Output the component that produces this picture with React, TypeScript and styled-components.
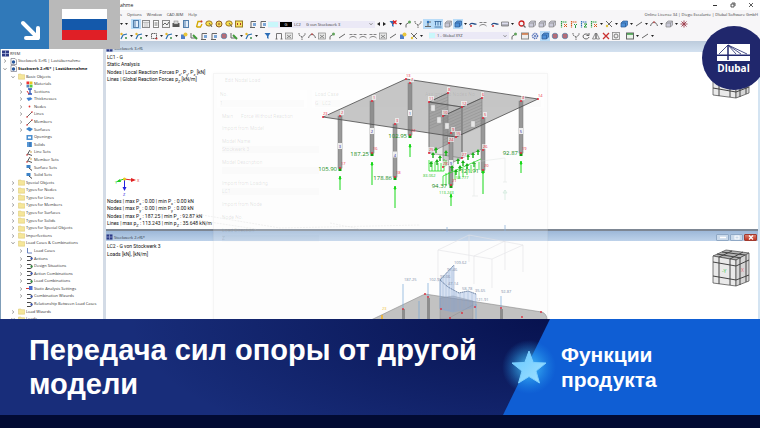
import React from "react";
import styled, { createGlobalStyle } from "styled-components";

const Global = createGlobalStyle`
  *, *::before, *::after { box-sizing: border-box; }
  html, body { margin: 0; padding: 0; }
  body { background: #020b33; }
  button, input, select { font: inherit; color: inherit; border: 0; padding: 0; margin: 0; background: none; }
`;

const ui = `"Open Sans", "Noto Sans", sans-serif`;
const narrow = `Roboto, "Liberation Sans", sans-serif`;
const display = `"Liberation Sans", Arial, sans-serif`;

/* ---------- page ---------- */

const Page = styled.div`
  display: flex;
  flex-direction: column;
  min-height: 100vh;
  overflow: hidden;
  font-family: ${ui};
  color: #3c3c3c;
`;

const Workspace = styled.main`
  position: relative;
  flex: 1 0 0;
  min-height: 0;
  display: flex;
  flex-direction: column;
  overflow: hidden;
  background: #fff;
`;

/* ---------- window chrome ---------- */

const TitleBar = styled.header`
  display: flex;
  justify-content: space-between;
  align-items: center;
  height: 10px;
  padding: 0 5px 0 120px;
  font-size: 5px;
  color: #222;
`;

const WindowControls = styled.div`
  display: flex;
  gap: 10px;
`;

const WindowControl = styled.button`
  display: flex;
  width: 8px;
  height: 8px;
  align-items: center;
  justify-content: center;
`;

const MenuBar = styled.nav`
  display: flex;
  justify-content: space-between;
  align-items: center;
  height: 8px;
  padding: 0 2px 0 120px;
  background: #f7f6f8;
  font-size: 4px;
`;

const MenuItems = styled.div`
  display: flex;
  gap: 5px;
`;

const MenuLink = styled.a`
  color: inherit;
  text-decoration: none;
`;

const Toolbar = styled.div<{ $h: number }>`
  display: flex;
  align-items: center;
  height: ${(p) => p.$h}px;
  padding-left: 119px;
  background: #f7f6f8;
`;

const Tool = styled.button<{ $on?: boolean; $gap?: number }>`
  display: flex;
  flex: none;
  width: 10px;
  height: 10px;
  margin-left: ${(p) => p.$gap ?? 0}px;
  align-items: center;
  justify-content: center;
  background: ${(p) => (p.$on ? "#b9dcf8" : "transparent")};
`;

const Drop = styled.button<{ $w?: number }>`
  display: flex;
  flex: none;
  width: ${(p) => p.$w ?? 5}px;
  height: 8px;
  align-items: center;
  justify-content: center;
`;

const Combo = styled.div<{ $w: number; $gap?: number }>`
  display: flex;
  flex: none;
  align-items: center;
  gap: 2px;
  width: ${(p) => p.$w}px;
  height: 7px;
  margin-left: ${(p) => p.$gap ?? 0}px;
  padding-right: 2px;
  background: #ebe9f6;
  font-size: 4px;
`;

const Swatch = styled.span<{ $dark?: boolean; $wide?: boolean }>`
  width: ${(p) => (p.$dark ? 12 : p.$wide ? 10 : 6)}px;
  height: 5px;
  background: ${(p) => (p.$dark ? "#000" : "#c9f7fb")};
  color: #fff;
  line-height: 5px;
  text-align: center;
`;

const CaseCode = styled.span`
  width: 10px;
`;

const ComboSelect = styled.select`
  flex: 1;
  min-width: 0;
  height: 7px;
  appearance: none;
  line-height: 7px;
  outline: 0;
`;

/* ---------- body ---------- */

const Body = styled.div`
  flex: 1;
  min-height: 0;
  display: grid;
  grid-template-columns: 106px minmax(0, 1fr);
  border-right: 2px solid #d4e4f2;
`;

const TreePanel = styled.aside`
  display: flex;
  min-height: 0;
  padding-top: 9px;
  background: #fff;
  border-left: 1px solid #7f9db8;
  border-right: 3px solid #d3dbe6;
`;

const TreeList = styled.ul`
  flex: 1;
  display: grid;
  grid-auto-rows: 1fr;
  margin: 0 0 -4px;
  padding: 0;
  list-style: none;
  font-size: 4px;
`;

const TreeRow = styled.li<{ $level: number; $bold?: boolean }>`
  display: flex;
  align-items: center;
  min-height: 0;
  padding-left: ${(p) => (p.$level < 0 ? 1 : 1 + p.$level * 8)}px;
  font-weight: ${(p) => (p.$bold ? 700 : 400)};
  color: ${(p) => (p.$bold ? "#111" : "#2e2e2e")};
  white-space: nowrap;
  line-height: 6px;
`;

const Toggle = styled.button`
  display: flex;
  width: 6px;
  height: 6px;
  margin-right: 2px;
  align-items: center;
  justify-content: center;
`;

const TreeIcon = styled.span`
  display: flex;
  width: 7px;
  height: 7px;
  margin-right: 1px;
`;

const Mdi = styled.section`
  position: relative;
  display: flex;
  flex-direction: column;
  min-height: 0;
  overflow: hidden;
`;

const DocWindow = styled.article<{ $main?: boolean }>`
  position: relative;
  display: flex;
  flex-direction: column;
  flex: ${(p) => (p.$main ? "0 0 190px" : "1 1 0")};
  min-height: 0;
  border-bottom: ${(p) => (p.$main ? "2px solid #7d8794" : "0")};
`;

const DocTitle = styled.header<{ $active?: boolean }>`
  display: flex;
  align-items: center;
  height: ${(p) => (p.$active ? 10 : 11)}px;
  padding: ${(p) => (p.$active ? "2px 1px 0 0" : "4px 1px 0 0")};
  background: ${(p) =>
    p.$active ? "linear-gradient(#9db8d8, #bdd2ea)" : "linear-gradient(#bccbdc, #d3e1f0)"};
  font-size: 4px;
  color: #2b3644;
  gap: 1px;
`;

const DocName = styled.span`
  flex: 1;
`;

const DocButton = styled.button<{ $close?: boolean }>`
  display: flex;
  width: 13px;
  height: 7px;
  align-items: center;
  justify-content: center;
  border: 1px solid ${(p) => (p.$close ? "#a23a2e" : "#8fa8c5")};
  border-radius: 1px;
  background: ${(p) => (p.$close ? "linear-gradient(#dd8272, #bf3320)" : "#c9d9ea")};
`;

const Canvas = styled.div`
  flex: 1;
  display: flex;
  flex-direction: column;
  justify-content: space-between;
  padding: 2px 0 2px 1px;
  background: #fff;
`;

const Lines = styled.div<{ $rows: number }>`
  display: grid;
  grid-auto-rows: 1fr;
  align-items: center;
  height: ${(p) => (p.$rows === 4 ? 29 : 15)}px;
  font-family: ${narrow};
  font-size: 5px;
  line-height: 7px;
  color: #111;
  white-space: nowrap;

  sub {
    font-size: 4px;
    line-height: 1px;
  }
`;

const Scene = styled.svg`
  position: absolute;
  left: 0;
  top: 0;
  width: 652px;
  height: 278px;
  pointer-events: none;
  font-family: ${ui};
`;

const CubeSlot = styled.svg<{ $top: number }>`
  position: absolute;
  right: 8px;
  top: ${(p) => p.$top}px;
  width: 38px;
  height: 38px;
`;

/* ---------- fading dialog ---------- */

const Ghost = styled.form`
  position: absolute;
  left: 107px;
  top: 32px;
  width: 335px;
  bottom: -10px;
  padding: 3px;
  border: 1px solid rgba(0, 0, 0, 0.03);
  background: rgba(246, 246, 246, 0.22);
  box-shadow: 0 0 4px rgba(0, 0, 0, 0.03);
  font-family: ${narrow};
  font-size: 5px;
  line-height: 7px;
  color: rgba(60, 60, 60, 0.14);
`;

const GhostCaption = styled.div`
  padding-left: 8px;
  margin-bottom: 6px;
`;

const GhostTop = styled.div`
  display: grid;
  grid-template-columns: 90px 105px 1fr;
  gap: 5px;
  height: 18px;
`;

const GhostBox = styled.label`
  display: flex;
  flex-direction: column;
  justify-content: space-between;
  padding: 1px 3px;
  background: rgba(255, 255, 255, 0.55);
`;

const GhostInput = styled.input`
  width: 100%;
  height: 7px;
  background: rgba(0, 0, 0, 0.012);
`;

const GhostTabs = styled.div`
  display: flex;
  gap: 8px;
  padding: 5px;
  width: 62px;
  white-space: nowrap;
`;

const GhostFields = styled.div`
  display: grid;
  gap: 6px;
  width: 102px;
  padding-left: 5px;
`;

const GhostField = styled.label`
  display: grid;
  gap: 1px;
`;

/* ---------- overlays ---------- */

const Badges = styled.div`
  position: absolute;
  left: 0;
  top: 0;
  display: flex;
  height: 49px;
`;

const ArrowBadge = styled.div`
  display: flex;
  width: 49px;
  align-items: center;
  justify-content: center;
  padding: 13px 0 0 13px;
  background: #3079b9;
`;

const FlagBadge = styled.div`
  display: flex;
  width: 71px;
  align-items: center;
  justify-content: center;
  background: #b9b9b9;
`;

const Flag = styled.div`
  width: 45px;
  height: 31px;
  background: linear-gradient(#fff 0 33%, #1459ab 33% 67%, #e01f26 67%);
`;

const Brand = styled.div`
  position: absolute;
  right: -6px;
  top: 26px;
  display: flex;
  flex-direction: column;
  align-items: center;
  width: 64px;
  height: 64px;
  padding: 18px 1px 0 0;
  border-radius: 50%;
  background: #20276c;
  color: #fff;
  font: 700 10px/15px ${ui};
`;

/* ---------- caption banner ---------- */

const Banner = styled.section`
  display: grid;
  grid-template-columns: minmax(0, 1fr) 257px;
  min-height: 96px;
  background: radial-gradient(ellipse 420px 150px at 550px 0, #07124f, rgba(7, 18, 79, 0) 100%), #182d7a;
`;

const Headline = styled.h1`
  align-self: center;
  margin: 0;
  padding: 0 0 0 29px;
  font: 700 29px/34px ${display};
  color: #fff;
`;

const Category = styled.div`
  position: relative;
  isolation: isolate;
  display: flex;
  align-items: center;
  gap: 6px;
  font: 700 21px/25px ${display};
  color: #fff;

  &::before {
    content: "";
    position: absolute;
    inset: 0;
    z-index: -1;
    background: #0f5ed4;
    clip-path: polygon(47px 0, 100% 0, 100% 100%, 0 100%);
  }
`;

const CategoryName = styled.p`
  margin: 0;
  width: 120px;
`;

const StarMark = styled.svg`
  flex: none;
  width: 52px;
  height: 64px;
  overflow: visible;
`;

const Strip = styled.footer`
  height: 13px;
  background: #020b33;
`;

/* ---------- tool glyphs ---------- */

const K = "#666";
const B = "#2d6fb8";
const glyphs: Record<string, React.ReactNode> = {
  panel: <><rect x="1.5" y=".5" width="5" height="7" fill="#e4eefb" stroke="#5580ad" /><path d="M3 1v6" stroke="#5580ad" /></>,
  grid: <><rect x=".5" y=".5" width="7" height="7" fill="#eee" stroke="#888" /><path d="M1 2.500h6M3 2.500v5M5 2.500v5" stroke="#aaa" strokeWidth=".6" /></>,
  page: <><rect x="1.500" y=".5" width="5" height="7" fill="#fff" stroke="#888" /><path d="M2.500 3h3M2.500 5h3" stroke="#777" /></>,
  plot: <><rect x=".5" y=".5" width="7" height="7" fill="#f2f2f2" stroke="#888" /><path d="M1 5l2-2 2 2 2-3" fill="none" stroke={K} /></>,
  print: <><rect x=".5" y="3" width="7" height="4" fill="#555" /><rect x="2" y="1" width="4" height="3" fill="#ddd" stroke="#777" strokeWidth=".5" /></>,
  pen: <><path d="M1.500 7L3 1.500h4M1.500 7h4l1.500-3" fill="none" stroke="#d3a800" strokeWidth="1.300" /><circle cx="6.500" cy="1.500" r="1" fill="#c33" /></>,
  lasso: <><ellipse cx="4" cy="3.500" rx="3.200" ry="2.600" fill="#f6df4d" stroke="#a07a20" /><path d="M4 3l3 4" stroke={K} /></>,
  target: <><circle cx="4" cy="4" r="3" fill="#f3dc5c" stroke="#8e5a20" /><circle cx="4" cy="4" r="1.200" fill="#b84" /></>,
  box: <><rect x=".5" y="1" width="7" height="6" fill="#f7e465" stroke="#9a7c20" /><path d="M2.500 3v2M5.500 3v2" stroke="#a33" /></>,
  crane: <><path d="M2 7.500V1.500h5M1 7.500h5" fill="none" stroke={K} /><rect x="4" y="3" width="3" height="3" fill="#7ca7d8" /></>,
  filter: <path d="M.5 1h6L4.500 4v3L3 6V4z" fill={B} />,
  filterx: <><path d="M.5 1h6L4.500 4v3L3 6V4z" fill={B} /><path d="M4 .5l3.500 3.500M7.500 .5L4 4" stroke="#e02020" strokeWidth="1.200" /></>,
  node: <><path d="M2 7.500V4.500L5.500 2" stroke={K} fill="none" /><circle cx="5.500" cy="2" r="1.500" fill="#62a35d" /></>,
  fork: <path d="M1 1v2l3 2 3-2V1M4 5v3" fill="none" stroke={K} strokeDasharray="1.500 .6" />,
  support: <><path d="M1 6.500h6M4 6V2h3" fill="none" stroke={K} /><circle cx="4" cy="2" r="1.200" fill={B} /></>,
  loads: <path d="M.5 1.500h7M1.500 1.500v4M4 1.500v4M6.500 1.500v4M.5 7h7" stroke="#2f5f96" strokeWidth=".8" />,
  cube: <><path d="M1 3l2-2h4.500v4l-2 2H1z" fill="#c9c9d8" stroke="#888" strokeWidth=".7" /><path d="M1 3h4.500v4M5.500 3l2-2" fill="none" stroke="#888" strokeWidth=".7" /></>,
  bluecube: <><path d="M1 3l2-2h4.500v4l-2 2H1z" fill="#4d8fd6" stroke="#2b5a94" strokeWidth=".7" /><path d="M1 3h4.500v4" fill="none" stroke="#2b5a94" strokeWidth=".7" /></>,
  curve: <><path d="M.5 5c2-4 4 0 7-1" fill="none" stroke="#244c86" strokeWidth="1.200" /><circle cx="2" cy="6" r="1" fill="#c33" /></>,
  dash: <path d="M.5 2.500h3M4.500 2.500h3M.5 6c2-2 5-2 7 0" fill="none" stroke={K} strokeWidth=".8" />,
  ruler: <path d="M.5 2h7v4h-7zM2 4v2M4 4v2M6 4v2" fill="#dde" stroke={K} strokeWidth=".7" />,
  zoomx: <><circle cx="3.500" cy="3.500" r="2.500" fill="none" stroke="#c22" strokeWidth="1.300" /><path d="M5 5l2.500 2.500" stroke={K} strokeWidth="1.200" /></>,
  axisx: <><path d="M1.500 1v6.500M1 2h6" stroke="#2a9a40" strokeWidth="1.200" strokeDasharray="1.500 .5" /><path d="M4 4l3 3M7 4L4 7" stroke="#d95a1c" /></>,
  axisy: <><path d="M1.500 1v6.500M1 2h6" stroke="#d95a1c" strokeWidth="1.200" strokeDasharray="1.500 .5" /><path d="M4 4l1.500 1.500L7 4M5.500 5.500V8" stroke="#2a9a40" fill="none" /></>,
  axisz: <><path d="M1.500 1v6.500M1 2h6" stroke={B} strokeWidth="1.200" strokeDasharray="1.500 .5" /><path d="M4 4h3L4 7h3" stroke="#2a9a40" fill="none" /></>,
  cutter: <><path d="M1 1l6 6M7 1L1 7" stroke={K} /><circle cx="2" cy="6" r="1.200" fill="#e4c53c" /></>,
  arc: <><path d="M.5 6C2 1 6 1 7.500 6" fill="none" stroke={K} /><circle cx="4" cy="2.300" r="1" fill="#b55" /></>,
  line: <path d="M1 6L7 2" stroke={K} />,
  star: <path d="M4 .5v7M.5 4h7M1.500 1.500l5 5M6.500 1.500l-5 5" stroke="#9b3a49" strokeWidth=".9" />,
  square: <><path d="M1.500 1.500h5v5h-5z" fill="none" stroke={K} strokeDasharray="1.500 .5" /><circle cx="6.500" cy="6.500" r="1" fill="#c33" /></>,
  beam: <><path d="M1 7l2-4 4-1" fill="none" stroke="#2a6fb0" strokeWidth="1.200" /><circle cx="1.500" cy="2" r="1.200" fill="#e4b52c" /><circle cx="6" cy="6" r="1" fill="#3a8f4a" /></>,
  frame: <path d="M1.500 7V1.500h5V7M.5 7h2M5.500 7h2" fill="none" stroke={K} strokeWidth=".9" />,
  hatch: <><rect x=".5" y="1" width="7" height="6" fill="#e6e6e6" stroke="#888" strokeWidth=".7" /><path d="M2 3l4 3M6 3L2 6" stroke="#666" strokeWidth=".7" /></>,
  green: <><path d="M1 1v5h4" fill="none" stroke={K} /><path d="M3 3l4 4" stroke="#3f9a3a" strokeWidth="2" /></>,
  blueblob: <><rect x="1" y="2.500" width="4" height="4.500" fill="#4f7fc8" /><circle cx="5.500" cy="2.500" r="2" fill="#e8c63d" /></>,
  rotate: <path d="M6.500 3A3 2.500 0 1 0 7 5M7 1v2.500H4.500" fill="none" stroke={K} />,
  mirror: <path d="M3.500 1v6H.5zM4.500 1v6h3z" fill="none" stroke={K} strokeWidth=".7" />,
  del: <path d="M1 1l6 6M7 1L1 7" stroke="#c93030" strokeWidth="1.300" />,
  lens: <><rect x=".5" y=".5" width="7" height="7" fill="#eee" stroke="#888" strokeWidth=".8" /><circle cx="4" cy="4" r="2" fill="none" stroke={K} strokeWidth=".8" /></>,
  sheet: <><rect x=".5" y="1" width="7" height="6" fill="#eaf4ea" stroke={K} /><path d="M1 2h6" stroke="#3a9a40" strokeWidth="1.500" /></>,
  sheetred: <><rect x=".5" y="1" width="7" height="6" fill="#eee" stroke="#888" /><path d="M1 2h6" stroke="#d0703c" strokeWidth="1.500" /></>,
  gear: <><circle cx="4" cy="4" r="2.500" fill="none" stroke="#5270b8" strokeWidth="1.500" strokeDasharray="1.200 .6" /><circle cx="4" cy="4" r="1" fill="#5270b8" /></>,
  redblob: <><circle cx="4" cy="4" r="2.800" fill="#9aa7c0" stroke="#5c6d90" strokeWidth=".7" /><path d="M3 2v4M5 2v4" stroke="#c33" /></>,
};

type ToolSpec = { g: string; on?: boolean; gap?: number };
type Item = string | ToolSpec;

function Glyph({ name }: { name: string }) {
  return (
    <svg width="8" height="8" viewBox="0 0 8 8" aria-hidden="true">
      {glyphs[name]}
    </svg>
  );
}

const DownArrow = () => (
  <svg width="3" height="2" viewBox="0 0 3 2" aria-hidden="true">
    <path d="M0 0h3L1.500 2z" fill="#222" />
  </svg>
);

function Tools({ items }: { items: Item[] }) {
  return (
    <>
      {items.map((it, i) => {
        if (it === "v") return <Drop key={i} type="button" aria-label="More"><DownArrow /></Drop>;
        const spec: ToolSpec = typeof it === "string" ? { g: it } : it;
        return (
          <Tool key={i} type="button" aria-label={spec.g} $on={spec.on} $gap={spec.gap}>
            <Glyph name={spec.g} />
          </Tool>
        );
      })}
    </>
  );
}

const Chevron = ({ open }: { open?: boolean }) => (
  <svg width="4" height="4" viewBox="0 0 4 4" aria-hidden="true">
    <path d={open ? "M.5 1.200L2 2.800l1.500-1.600" : "M1.200 .5L2.800 2 1.200 3.500"} fill="none" stroke="#666" strokeWidth=".7" />
  </svg>
);

/* ---------- tree ---------- */

const treeGlyphs: Record<string, React.ReactNode> = {
  app: <><rect width="7" height="6" y=".5" fill="#2c3a86" /><path d="M0 3.500h7M3.500 .5v6" stroke="#b9c3e6" strokeWidth=".7" /></>,
  model: <><path d="M1 .5h4l1.500 1.500v4.500H1z" fill="#fff" stroke="#667" strokeWidth=".6" /><circle cx="3.500" cy="4" r="1.700" fill="#24549c" /></>,
  folder: <path d="M.5 1h2.500l.7.700h3v4.500H.5z" fill="#f5e69a" stroke="#d8c46c" strokeWidth=".5" />,
  mat: <><rect x=".5" y=".5" width="2.800" height="2.800" fill="#e33" /><rect x="3.700" y=".5" width="2.800" height="2.800" fill="#e8c51e" /><rect x=".5" y="3.700" width="2.800" height="2.800" fill="#58b" /><rect x="3.700" y="3.700" width="2.800" height="2.800" fill="#5c4" /></>,
  sec: <><path d="M2 1h4M4 1v5M2 6h4" stroke="#2c55b8" strokeWidth="1.300" /><path d="M1 3l2 3" stroke="#d33" /></>,
  thick: <path d="M.5 2l4-.7L6.500 3l-4 2z" fill="#3d7fd0" />,
  node: <circle cx="3.500" cy="3.500" r=".9" fill="#e03030" />,
  line: <><path d="M1 6l5-5" stroke="#444" strokeWidth=".8" /><circle cx="1" cy="6" r=".8" fill="#d33" /><circle cx="6" cy="1" r=".8" fill="#d33" /></>,
  surf: <path d="M0 3l3-2 4 2-3 2.500z" fill="#3d83c8" />,
  open: <><rect x=".5" y="1" width="6" height="5" fill="#4b8fd0" /><rect x="2" y="2.500" width="3" height="2" fill="#fff" /></>,
  solid: <><rect x="1" y="1" width="5" height="5" fill="#5898d6" /><path d="M4 1v5" stroke="#2a5f9c" /></>,
  set: <><path d="M1 6l3-5M2 5l4 1.500" stroke="#444" strokeWidth=".9" /><circle cx="1" cy="6" r=".8" fill="#d33" /><circle cx="5" cy="3" r=".8" fill="#c93" /></>,
  sset: <><rect x=".5" y="1" width="4" height="3" fill="#3d83c8" /><path d="M3 4l3 2.500" stroke="#444" /></>,
  load: <path d="M1.500 1v5h4.500" fill="none" stroke="#4668b0" strokeWidth=".8" />,
  act: <><path d="M1 1.500h3a2 2 0 0 1 0 4H1" fill="none" stroke="#333" strokeWidth=".9" /><circle cx="5.500" cy="3.500" r="1.100" fill="#3657c8" /></>,
  acg: <><path d="M1 1.500h3a2 2 0 0 1 0 4H1" fill="none" stroke="#333" strokeWidth=".9" /><circle cx="5.500" cy="3.500" r="1.100" fill="#2f9b3f" /></>,
  stat: <><path d="M0 3.500h3" stroke="#d33" /><path d="M3 1h3.500v4H3z" fill="#4a6fd0" /></>,
};

type Node = [number, string, string, string];
const tree: Node[] = [
  [-1, "", "app", "RFEM"],
  [0, ">", "model", "Stockwerk 3.rf6 | Lastübernahme"],
  [0, "v", "model", "Stockwerk 2.rf6* | Lastübernahme"],
  [1, "v", "folder", "Basic Objects"],
  [2, ">", "mat", "Materials"],
  [2, ">", "sec", "Sections"],
  [2, ">", "thick", "Thicknesses"],
  [2, ">", "node", "Nodes"],
  [2, ">", "line", "Lines"],
  [2, ">", "line", "Members"],
  [2, ">", "surf", "Surfaces"],
  [2, "", "open", "Openings"],
  [2, "", "solid", "Solids"],
  [2, "", "set", "Line Sets"],
  [2, "", "set", "Member Sets"],
  [2, "", "sset", "Surface Sets"],
  [2, "", "sset", "Solid Sets"],
  [1, ">", "folder", "Special Objects"],
  [1, ">", "folder", "Types for Nodes"],
  [1, ">", "folder", "Types for Lines"],
  [1, ">", "folder", "Types for Members"],
  [1, ">", "folder", "Types for Surfaces"],
  [1, ">", "folder", "Types for Solids"],
  [1, ">", "folder", "Types for Special Objects"],
  [1, ">", "folder", "Imperfections"],
  [1, "v", "folder", "Load Cases & Combinations"],
  [2, ">", "load", "Load Cases"],
  [2, ">", "act", "Actions"],
  [2, ">", "acg", "Design Situations"],
  [2, ">", "act", "Action Combinations"],
  [2, ">", "acg", "Load Combinations"],
  [2, ">", "stat", "Static Analysis Settings"],
  [2, ">", "act", "Combination Wizards"],
  [2, "", "act", "Relationship Between Load Cases"],
  [1, ">", "folder", "Load Wizards"],
  [1, "v", "folder", "Loads"],
];

function Tree() {
  return (
    <TreeList>
      {tree.map(([level, state, icon, name]) => (
        <TreeRow key={name} $level={level} $bold={level === 0 && state === "v"}>
          {level >= 0 && (
            <Toggle type="button" aria-label={name}>
              {state && <Chevron open={state === "v"} />}
            </Toggle>
          )}
          <TreeIcon>
            <svg width="7" height="7" viewBox="0 0 7 7" aria-hidden="true">{treeGlyphs[icon]}</svg>
          </TreeIcon>
          {name}
        </TreeRow>
      ))}
    </TreeList>
  );
}

/* ---------- model drawings ---------- */

// x, top y, bottom y of each column with its upper, lower and member number
const columns: [number, number, number, string, string, string][] = [
  [340, 116, 168, "2", "17", "3"],
  [372, 101, 153, "1", "16", "2"],
  [410, 83, 135, "7", "22", "1"],
  [395, 124, 177, "3", "18", "4"],
  [521, 101, 153, "4", "19", "5"],
  [483, 118, 170, "5", "20", ""],
  [451, 133, 185, "9", "21", "9"],
];

// x, top, bottom of each reaction arrow
const arrows: [number, number, number][] = [
  [340, 176, 190], [372, 162, 185], [410, 144, 157], [395, 186, 208], [521, 161, 173], [483, 170, 194], [451, 194, 206],
];

const forces: [number, number, string][] = [
  [337, 171, "105.90"], [369, 156, "187.25"], [407, 138, "102.95"], [392, 180, "178.86"],
  [518, 155, "92.87"], [479, 173, "121.91"], [447, 188, "94.37"],
];

const nodes: [number, number, string][] = [
  [406, 79, "13"], [538, 99, "14"], [323, 117, "23"], [456, 137, "15"], [448, 93, "8"], [482, 98, "6"],
  [429, 102, "11"], [462, 107, "12"], [443, 116, "10"], [429, 153, "25"], [462, 158, "27"], [443, 167, "28"], [483, 150, "26"], [449, 143, "24"],
];

const sprouts: [number, number][] = [
  [433, 155], [436, 150], [440, 158], [446, 153], [446, 163], [458, 161], [463, 163], [468, 157], [473, 155], [478, 152], [452, 168], [460, 168], [467, 166], [437, 162], [431, 164], [474, 164], [456, 172],
];

function Reactions() {
  return (
    <g>
      <g fill="rgba(120,120,120,.38)" stroke="#777" strokeWidth=".6">
        <path d="M448 93l-19 9v51l19-9z" />
        <path d="M482 98l-20 9v51l20-9z" />
        <path d="M462 107l-19 9v51l19-9z" />
        <path d="M429 102l33 5v51l-33-5z" fillOpacity=".4" />
      </g>
      <g stroke="#888" strokeWidth=".4">
        {[0, 1, 2, 3, 4, 5, 6, 7, 8].map((i) => (
          <path key={i} d={`M429 ${105 + i * 3}l19-8M443 ${119 + i * 3}l39-17`} />
        ))}
      </g>
      {columns.map(([x, a, b]) => (
        <rect key={x} x={x - 2} y={a} width="4" height={b - a} fill="#999" stroke="#777" strokeWidth=".5" />
      ))}
      <path d="M406 79L538 99 456 137 323 117z" fill="rgba(130,130,130,.45)" stroke="#4a4a4a" strokeWidth=".8" />
      <path d="M429 102l19-9M429 102l33 5M443 116l39-18" stroke="#444" strokeWidth=".7" />
      {columns.map(([x, a, b, , , n]) => (
        <g key={x}>
          {n && <rect x={x - 2} y={(a + b) / 2 + 1} width="4" height="6" fill="#eee" />}
          <text x={x} y={(a + b) / 2 + 6} fontSize="4" textAnchor="middle" fill="#2222a0">{n}</text>
        </g>
      ))}
      {[[438, 120], [446, 126], [472, 124], [432, 108]].map(([x, y]) => (
        <rect key={x} x={x - 1} y={y - 3} width="4" height="6" fill="#e6e6e6" stroke="#aaa" strokeWidth=".4" />
      ))}
      <g stroke="#1fe01f" strokeWidth=".8" fill="none">
        <path d="M429 160v11h15V159M432 161v10M435 162v9M438 163v8M441 163v8M443 176v10M446 173v13M449 172v12M455 171v9M459 170v9M463 168v9M467 167v8M471 165v8M475 164v8M479 162v8M443 176l38-17" />
      </g>
      <g fill="#18b018">
        {sprouts.map(([x, y]) => <path key={`${x}-${y}`} d={`M${x} ${y - 3}l2 3h-1.300v3h-1.400v-3h-1.300z`} />)}
      </g>
      {columns.map(([x, , b]) => <rect key={x} x={x - 1.5} y={b} width="3" height="3" fill="#12a012" />)}
      <g stroke="#16d916" strokeWidth="1" fill="#16d916">
        {arrows.map(([x, a, b]) => (
          <g key={x}>
            <path d={`M${x} ${a + 2}V${b}`} />
            <path d={`M${x} ${a}l1 3h-2z`} />
          </g>
        ))}
      </g>
      <g fontSize="6" fill="#168a16" textAnchor="end">
        {forces.map(([x, y, t]) => <text key={t} x={x} y={y}>{t}</text>)}
      </g>
      <g fontSize="4" fill="#1fc41f">
        <text x="423" y="177">83.062</text>
        <text x="456" y="179">58.777</text>
        <text x="439" y="194">113.243</text>
      </g>
      <g fontSize="4" fill="#e8283c">
        {nodes.map(([x, y, t]) => (
          <g key={t}>
            <rect x={x - 1} y={y - 6} width={t.length * 3} height="5" fill="rgba(255,255,255,.6)" />
            <circle cx={x} cy={y} r="1" />
            <text x={x} y={y - 2}>{t}</text>
          </g>
        ))}
        {columns.map(([x, a, b, t, u]) => (
          <g key={x}>
            <rect x={x} y={a - 6} width="4" height="5" fill="rgba(255,255,255,.6)" />
            <circle cx={x} cy={a} r="1" />
            <circle cx={x} cy={b} r="1" />
            <text x={x + 1} y={a - 2}>{t}</text>
            <text x={x + 1} y={b - 3}>{u}</text>
          </g>
        ))}
      </g>
      <g stroke="#d5dcd8" strokeWidth=".6" fill="none" opacity=".6">
        <path d="M474 162l31-4v24M503 182h4M474 162v34M472 196h6" />
        <path d="M505 190v10M505 190l-2 3h4z" stroke="#a9d8c0" />
      </g>
      <path d="M196 214l84 14 140-3M196 214v6l60 9M330 223l30 6" fill="none" stroke="#e8e8e8" strokeWidth=".6" strokeDasharray="2 1" />
    </g>
  );
}

function Axes() {
  return (
    <g>
      <path d="M124.500 179l7 1" stroke="#e02222" strokeWidth="1" />
      <path d="M131 178l5 2-5 2z" fill="#e02222" />
      <path d="M124 179l-6 2" stroke="#1fcf1f" strokeWidth="1" />
      <path d="M120 179l-4 3 5 0z" fill="#1fcf1f" />
      <path d="M124.500 180v8" stroke="#2222e0" strokeWidth="1" />
      <path d="M122.500 187h4l-2 4z" fill="#2222e0" />
      <circle cx="124.500" cy="179" r="1.500" fill="#e8c81c" />
      <text x="137" y="182" fontSize="4" fill="#e02222">X</text>
      <text x="115" y="184" fontSize="4" fill="#1fcf1f">Y</text>
      <text x="123" y="196" fontSize="4" fill="#2222e0">Z</text>
    </g>
  );
}

const loadLabels: [number, number, string][] = [
  [404, 281, "187.25"], [429, 281, "102.95"], [454, 264, "109.62"], [447, 271, "97.46"], [440, 278, "93.06"],
  [448, 285, "47.14"], [462, 290, "58.78"], [475, 292, "35.65"], [476, 301, "121.91"], [501, 293, "92.87"],
];

function Loads() {
  return (
    <g>
      <g stroke="#e3e3e6" strokeWidth=".6" fill="none">
        <path d="M438 250l31-15 54 10-31 14zM438 250v32M469 235v27M523 245v27M492 259v29M474 256l31-15v29M474 256v28" />
      </g>
      <g stroke="#8fb2d8" strokeWidth=".8"><path d="M447 227v5M505 225v6" /></g>
      <path d="M371 320L425 294 542 312q5 2 5 8z" fill="#c2c2c2" stroke="#8a8a8a" strokeWidth=".6" />
      <path d="M440 298l13-2 20 5v18h-33zM473 305l-24 13" fill="rgba(140,140,150,.4)" stroke="#888" strokeWidth=".4" />
      <g fill="#8d8d8d">
        <rect x="402" y="309" width="3" height="10" /><rect x="427" y="298" width="3" height="21" /><rect x="500" y="309" width="3" height="10" />
      </g>
      <path d="M440 280l14-15v46l-14-2zM440 280l8 7 11 6 9-2 8 3v13l-23 5-13-3z" fill="rgba(120,155,215,.28)" stroke="#8ba6cf" strokeWidth=".5" />
      <path d="M440 280l14-15M440 280l8 7 11 6 9-2 8 3" fill="none" stroke="#56657c" strokeWidth=".8" strokeDasharray="1 1" />
      <path d="M443 277v32M446 274v35M449 271v39M452 268v42M456 292v18M460 293v16M464 292v16M468 291v16M472 292v14" stroke="#8ba6cf" strokeWidth=".4" />
      <path d="M403 284v25M428 283v15M501 296v13M419 301v18M476 304v15" stroke="#76a6d6" strokeWidth=".7" />
      <g fill="#e02a3a">
        {[[425, 294], [428, 297], [403, 309], [541, 312], [501, 308], [522, 317], [441, 309], [475, 307], [462, 313], [450, 318]].map(([x, y]) => (
          <circle key={x} cx={x} cy={y} r=".9" />
        ))}
      </g>
      <path d="M382 315v4" stroke="#f5b21c" strokeWidth="1.500" />
      <text x="382" y="310" fontSize="4" fill="#f0c030">23</text>
      <g fontSize="4" fill="#7d8fa8">
        {loadLabels.map(([x, y, t]) => <text key={t} x={x} y={y}>{t}</text>)}
      </g>
    </g>
  );
}

function Cube({ top }: { top: number }) {
  return (
    <CubeSlot $top={top} viewBox="0 0 38 38" aria-hidden="true">
      <g stroke="#444" strokeWidth=".7">
        <path d="M1 7L14 1l23 3-13 7z" fill="#b5b5b5" />
        <path d="M1 7l23 4v26L1 34z" fill="#e9e9e9" />
        <path d="M24 11l13-7v28l-13 5z" fill="#d6d6d6" />
        <path d="M1 13l23 4 13-6M1 27l23 4 13-5M7 8v27M18 10v26M28 9v27M34 6v27M5 5l24 4M10 3l23 3M7 8l13-6M18 10l13-7" fill="none" strokeWidth="1" />
      </g>
      <text x="10" y="24" fontSize="5" fill="#2fc83f">-Y</text>
      <text x="29" y="23" fontSize="5" fill="#e26a78">X</text>
    </CubeSlot>
  );
}

const DocIcon = () => (
  <svg width="7" height="6" viewBox="0 0 7 7" aria-hidden="true">{treeGlyphs.app}</svg>
);

export default function App() {
  return (
    <Page>
      <Global />
      <Workspace>
        <TitleBar>
          <span>ahme</span>
          <WindowControls>
            <WindowControl type="button" aria-label="Minimize"><svg width="6" height="6"><path d="M1 3.500h4" stroke="#333" /></svg></WindowControl>
            <WindowControl type="button" aria-label="Restore"><svg width="6" height="6"><path d="M1 2h3v3H1zM2 1h3v3" fill="none" stroke="#333" strokeWidth=".8" /></svg></WindowControl>
            <WindowControl type="button" aria-label="Close"><svg width="6" height="6"><path d="M1 1l4 4M5 1L1 5" stroke="#333" strokeWidth=".8" /></svg></WindowControl>
          </WindowControls>
        </TitleBar>
        <MenuBar>
          <MenuItems>
            <MenuLink href="#tools">s</MenuLink>
            <MenuLink href="#options">Options</MenuLink>
            <MenuLink href="#window">Window</MenuLink>
            <MenuLink href="#cad-bim">CAD-BIM</MenuLink>
            <MenuLink href="#help">Help</MenuLink>
          </MenuItems>
          <span>Online License 34 | Diego Escalante | Dlubal Software GmbH</span>
        </MenuBar>
        <Toolbar $h={12}>
          <Tools items={["v", "v", { g: "panel", on: true, gap: 2 }, "grid", "page", "plot", "print", "panel", { g: "pen", gap: 3 }, "lasso", "target", "lasso", "box", { g: "crane", gap: 4 }, "crane"]} />
          <Combo $w={107}>
            <Swatch $wide />
            <Swatch $dark>G</Swatch>
            <CaseCode>LC2</CaseCode>
            <ComboSelect aria-label="Load case"><option>G von Stockwerk 3</option></ComboSelect>
            <Chevron open />
          </Combo>
          <Drop $w={6} type="button" aria-label="Previous"><svg width="3" height="4"><path d="M3 0v4L0 2z" fill="#222" /></svg></Drop>
          <Drop $w={7} type="button" aria-label="Next"><svg width="3" height="4"><path d="M0 0v4l3-2z" fill="#222" /></svg></Drop>
          <Tools items={["filterx", "v", "node", "fork", { g: "support", on: true }, { g: "loads", on: true }, "cube", { g: "bluecube", on: true }, "v", "curve", "dash", { g: "curve", gap: 2 }, "ruler", "v", { g: "zoomx", gap: 2 }, "cube", "cube", "cube", { g: "axisx", gap: 2 }, "axisy", "axisz", "axisx", "v", "cutter", "v", "bluecube", "v", "line", "v", "arc", "v", "cube", "v", "star"]} />
        </Toolbar>
        <Toolbar $h={11}>
          <Tools items={["beam", "v", "beam", "v", "square", "v", "beam", "v", "blueblob", "green", "crane", "crane", "redblob", "green", "v", "beam", "v", { g: "filter", gap: 4 }, { g: "frame", gap: 1 }, "hatch", { g: "fork", gap: 3 }, "arc", "hatch", "node", "line", { g: "dash", gap: 1 }, "dash", "dash", "hatch", "line", "blueblob", { g: "cutter", gap: 1 }, "v"]} />
          <Combo $w={80} $gap={5}>
            <Swatch />
            <ComboSelect aria-label="Coordinate system"><option>1 - Global XYZ</option></ComboSelect>
            <Chevron open />
          </Combo>
          <Tools items={["node", { g: "sheetred", gap: 1 }, "gear", { g: "bluecube", on: true }, "redblob", "redblob", { g: "fork", gap: 1 }, "rotate", "mirror", "del", "lens", { g: "sheet", gap: 4 }, "v", "line", "v"]} />
        </Toolbar>

        <Body>
          <TreePanel><Tree /></TreePanel>
          <Mdi>
            <DocWindow $main>
              <DocTitle><DocIcon /><DocName>Stockwerk 3.rf6</DocName></DocTitle>
              <Canvas>
                <Lines $rows={4}>
                  <span>LC1 - G</span>
                  <span>Static Analysis</span>
                  <span>Nodes | Local Reaction Forces P<sub>x</sub>, P<sub>y</sub>, P<sub>z</sub> [kN]</span>
                  <span>Lines | Global Reaction Forces p<sub>Z</sub> [kN/m]</span>
                </Lines>
                <Lines $rows={4}>
                  <span>Nodes | max P<sub>x</sub> : 0.00 | min P<sub>x</sub> : 0.00 kN</span>
                  <span>Nodes | max P<sub>y</sub> : 0.00 | min P<sub>y</sub> : 0.00 kN</span>
                  <span>Nodes | max P<sub>z</sub> : 187.25 | min P<sub>z</sub> : 92.87 kN</span>
                  <span>Lines | max p<sub>Z</sub> : 113.243 | min p<sub>Z</sub> : 35.648 kN/m</span>
                </Lines>
              </Canvas>
              <Cube top={20} />
            </DocWindow>
            <DocWindow>
              <DocTitle $active>
                <DocIcon /><DocName>Stockwerk 2.rf6*</DocName>
                <DocButton type="button" aria-label="Minimize window"><svg width="6" height="4"><path d="M0 2.500h6" stroke="#fff" strokeWidth="1.500" /></svg></DocButton>
                <DocButton type="button" aria-label="Restore window"><svg width="6" height="5"><rect x="1" y="1" width="4" height="3" fill="none" stroke="#fff" /></svg></DocButton>
                <DocButton $close type="button" aria-label="Close window"><svg width="6" height="5"><path d="M1 .5l4 4M5 .5l-4 4" stroke="#fff" strokeWidth="1.300" /></svg></DocButton>
              </DocTitle>
              <Canvas>
                <Lines $rows={2}>
                  <span>LC2 - G von Stockwerk 3</span>
                  <span>Loads [kN], [kN/m]</span>
                </Lines>
              </Canvas>
              <Cube top={18} />
            </DocWindow>
            <Ghost>
              <GhostCaption>Edit Nodal Load</GhostCaption>
              <GhostTop>
                <GhostBox>No.<GhostInput defaultValue="1" /></GhostBox>
                <GhostBox>Load Case<GhostInput defaultValue="G   LC2" /></GhostBox>
                <GhostBox>Assigned to Nodes No.<GhostInput /></GhostBox>
              </GhostTop>
              <GhostTabs><span>Main</span><span>Force Without Reaction</span></GhostTabs>
              <GhostFields>
                <span>Import from Model</span>
                <GhostField>Model Name<GhostInput defaultValue="Stockwerk 3" /></GhostField>
                <GhostField>Model Description<GhostInput /></GhostField>
                <GhostField>Import from Loading<GhostInput defaultValue="LC1" /></GhostField>
                <span>Import from Node</span>
                <span>Node No.</span>
                <GhostField>Load Direction<GhostInput defaultValue="Z" /></GhostField>
              </GhostFields>
            </Ghost>
            <Scene viewBox="106 41 652 278" aria-hidden="true">
              <Axes />
              <Reactions />
              <Loads />
            </Scene>
          </Mdi>
        </Body>

        <Badges>
          <ArrowBadge>
            <svg width="22" height="22" viewBox="0 0 22 22" fill="none" stroke="#fff" strokeWidth="4" strokeLinecap="round" strokeLinejoin="round" aria-hidden="true">
              <path d="M3 3l15 15M18 8v10H6" />
            </svg>
          </ArrowBadge>
          <FlagBadge><Flag /></FlagBadge>
        </Badges>
        <Brand>
          <svg width="33" height="17" viewBox="0 0 33 17" aria-hidden="true">
            <path d="M0 0h33v10.500H0zM0 12h33v5H0z" fill="#fff" />
            <path d="M11 1v15" stroke="#20276c" strokeWidth="1.500" />
            <path d="M11 1L2 10M11 1l8 9M11 1l13 9M11 1l19 9" fill="none" stroke="#20276c" strokeWidth=".8" />
          </svg>
          Dlubal
        </Brand>
      </Workspace>

      <Banner>
        <Headline>Передача сил опоры от другой модели</Headline>
        <Category>
          <StarMark viewBox="0 0 52 64" aria-hidden="true">
            <defs>
              <radialGradient id="glow">
                <stop offset="0" stopColor="#4fc8ff" stopOpacity=".95" />
                <stop offset=".5" stopColor="#35b0f5" stopOpacity=".5" />
                <stop offset="1" stopColor="#1f8fe8" stopOpacity="0" />
              </radialGradient>
              <linearGradient id="starfill" x1="0" y1="0" x2="1" y2="1">
                <stop offset="0" stopColor="#62c6ff" />
                <stop offset="1" stopColor="#a5e2ff" />
              </linearGradient>
            </defs>
            <circle cx="26" cy="32" r="27" fill="url(#glow)" />
            <path d="M26 16l4.200 11.500 12.800.5-10 8 3.500 12L26 41.500 15.500 48 19 36 9 28l12.800-.5z" fill="url(#starfill)" stroke="#7dd0ff" strokeWidth="1" strokeLinejoin="round" />
          </StarMark>
          <CategoryName>Функции продукта</CategoryName>
        </Category>
      </Banner>
      <Strip />
    </Page>
  );
}
